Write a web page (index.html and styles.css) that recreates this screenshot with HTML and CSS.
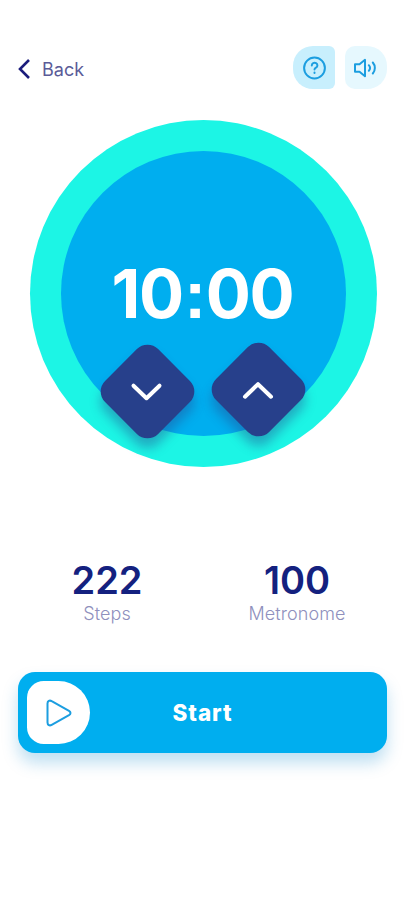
FILE: index.html
```html
<!DOCTYPE html>
<html lang="en">

<head>
    <meta charset="utf-8">
    <meta name="viewport" content="width=device-width, initial-scale=1.0">
    <title>Timer</title>
    <link rel="stylesheet" href="styles.css">
</head>

<body>

    <header>
        <a class="back" href="#">
            <svg width="12" height="20" viewBox="0 0 12 20">
                <path d="M11 1L2 10l9 9" />
            </svg>
            <span class="back-text">Back</span>
        </a>
        <nav>
            <button class="help" aria-label="Help">
                <svg width="24" height="24" viewBox="0 0 24 24">
                    <circle cx="12.500" cy="12" r="10.400" />
                    <path d="M9.800 9.400a2.800 2.600 0 1 1 4.200 2.300c-1 .6-1.500 1-1.500 1.800" />
                    <path d="M12.500 16.600v.3" />
                </svg>
            </button>
            <button class="sound" aria-label="Sound">
                <svg width="26" height="24" viewBox="0 0 26 24">
                    <path d="M2 8.200h4.500L12 3.800v16.400L6.500 15.800H2z" />
                    <path d="M15.800 9.200a4.200 4.200 0 0 1 0 5.600" />
                    <path d="M19.800 6.500a8.400 8.400 0 0 1 0 11" />
                </svg>
            </button>
        </nav>
    </header>

    <section class="timer">
        <div class="dial">
            <h1 class="time">10<span class="colon">:</span>00</h1>
            <div class="controls">
                <button class="step down" aria-label="Less">
                    <svg width="34" height="22" viewBox="0 0 34 22">
                        <path d="M3 4.500L16 17L29 4.500" />
                    </svg>
                </button>
                <button class="step up" aria-label="More">
                    <svg width="34" height="22" viewBox="0 0 34 22">
                        <path d="M3.500 17.500L16.500 5L29.500 17.500" />
                    </svg>
                </button>
            </div>
        </div>
    </section>

    <section class="stats">
        <article>
            <h2 class="steps">222</h2>
            <p>Steps</p>
        </article>
        <article>
            <h2 class="metronome">100</h2>
            <p class="metronome-text">Metronome</p>
        </article>
    </section>

    <button class="start">
        <span class="play">
            <svg width="28" height="30" viewBox="0 0 28 30">
                <path d="M2.500 5.500v19c0 2.500 2 3.600 4.200 2.300L24 17.200c2-1.200 2-3.200 0-4.400L6.700 3.200C4.500 1.900 2.500 3 2.500 5.500z" />
            </svg>
        </span>
        <span class="start-text">Start</span>
    </button>

</body>

</html>
```

FILE: styles.css
```css
* {
    box-sizing: border-box;
}

body {
    margin: 0;
    padding: 46px 17px 0 18px;
    height: 900px;
    background-color: #ffffff;
    font-family: 'Inter', sans-serif;
}

h1,
h2,
p {
    margin: 0;
}

svg {
    display: block;
    fill: none;
    stroke-linecap: round;
    stroke-linejoin: round;
}

button {
    display: flex;
    align-items: center;
    justify-content: center;
    padding: 0;
    border: none;
    font-family: inherit;
    cursor: pointer;
}

header {
    display: flex;
    align-items: center;
    justify-content: space-between;
    height: 43px;
}

nav {
    display: flex;
    gap: 10px;
}

.back {
    display: flex;
    align-items: center;
    gap: 12px;
    padding-top: 3px;
    color: #5a5b98;
    font-size: 18px;
    line-height: 20px;
    text-decoration: none;
}

.back svg {
    stroke: #1c1d7c;
    stroke-width: 2.6;
    stroke-linecap: butt;
    stroke-linejoin: miter;
}

.back-text {
    padding-top: 1px;
}

.help,
.sound {
    width: 42px;
    height: 43px;
}

.help svg,
.sound svg {
    stroke: #1c9ee0;
    stroke-width: 2;
}

.help {
    background-color: #c8effd;
    border-radius: 20px 6px 6px 20px;
}

.sound {
    background-color: #e6f8fe;
    border-radius: 10px 20px 20px 10px;
}

/* the timer */

.timer {
    width: 347px;
    height: 347px;
    margin: 31px 0 0 12px;
    padding: 31px;
    background-color: #1cf5e5;
    border-radius: 50%;
}

.dial {
    display: flex;
    flex-direction: column;
    align-items: center;
    width: 285px;
    height: 285px;
    padding-top: 103px;
    background-color: #00aeef;
    border-radius: 50%;
}

.time {
    height: 80px;
    padding-right: 2px;
    color: #ffffff;
    font-size: 67px;
    font-weight: 700;
    line-height: 80px;
    letter-spacing: -1.4px;
    white-space: nowrap;
}

.colon {
    padding: 0 1px;
    font-family: 'Liberation Sans', sans-serif;
}

.controls {
    display: flex;
    gap: 36px;
    padding: 18px 2px 0 0;
}

.step {
    width: 75px;
    height: 75px;
    background-color: #27408b;
    border-radius: 15px;
    box-shadow: 7px 7px 11px rgba(39, 64, 139, 0.4);
    transform: rotate(45deg);
}

.step svg {
    stroke: #ffffff;
    stroke-width: 4;
    transform: rotate(-45deg);
}

.down {
    margin-top: 2px;
}

/* steps and metronome */

.stats {
    display: grid;
    grid-template-columns: 178px 202px;
    margin-top: 94px;
    text-align: center;
}

h2 {
    color: #14217f;
    font-size: 38px;
    font-weight: 600;
    line-height: 38px;
}

p {
    color: #8f90bd;
    font-size: 18px;
    font-weight: 300;
    line-height: 30px;
    letter-spacing: 0.1px;
}

.start {
    position: relative;
    width: 369px;
    height: 81px;
    margin-top: 43px;
    background-color: #00aeef;
    border-radius: 17px;
    box-shadow: 0 10px 16px rgba(0, 130, 205, 0.25);
    color: #ffffff;
    font-size: 22.5px;
    font-weight: 800;
    letter-spacing: 0.9px;
}

.play {
    position: absolute;
    top: 9px;
    left: 9px;
    display: flex;
    align-items: center;
    justify-content: center;
    width: 63px;
    height: 63px;
    background-color: #ffffff;
    border-radius: 17px 32px 32px 17px;
}

.play svg {
    stroke: #1c9ee0;
    stroke-width: 2;
}
```
